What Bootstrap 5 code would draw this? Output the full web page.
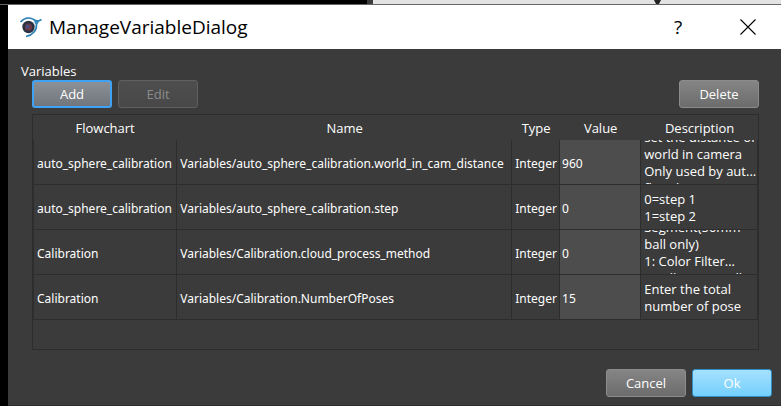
<!DOCTYPE html>
<html lang="en">
<head>
<meta charset="utf-8">
<meta name="viewport" content="width=device-width, initial-scale=1">
<title>ManageVariableDialog</title>
<link href="https://cdn.jsdelivr.net/npm/bootstrap@5.3.0/dist/css/bootstrap.min.css" rel="stylesheet">
<style>
body{background:#000;color:#fff;font:13px/17px "Open Sans","Noto Sans",sans-serif}
.backdrop{height:5px;overflow:hidden;border-bottom:1px solid #666}
.backdrop .dark-part{width:47%;background:#000}
.backdrop .light-part{background:#e3e3e3;border-left:6px solid #3c3c3c}
.marker{width:7px;height:5px;margin-right:120px}
.dialog{margin-left:8px;background:#3b3b3b;border-bottom:1px solid #2e2e2e}
.titlebar{height:44px;background:#fff;color:#000;padding:0 18px 0 10px}
.titlebar h1{font:19px/26px "Open Sans","Noto Sans",sans-serif;margin:0 0 0 5px}
.win-btn{width:30px;height:30px;border:0;background:none;padding:0;color:#000;font-size:19px;line-height:30px}
.win-btn + .win-btn{margin-left:40px}
.content{padding:14px 9px 8px 13px}
.group{padding:0 13px 0 11px}
.dlg-btn{width:80px;height:28px;padding:0;font-size:13px;line-height:24px;color:#fff;border:1px solid #8c8c8c;border-radius:3px;background:linear-gradient(#858585,#6c6c6c)}
.dlg-btn:hover{color:#fff;border-color:#a0a0a0}
.dlg-btn.focused{border:2px solid #3fa2f5;background:linear-gradient(#8b9197,#71767c)}
.dlg-btn:disabled{opacity:1;color:#8b8b8b;border-color:#606060;background:linear-gradient(#4e4e4e,#484848)}
.dlg-btn.accept{border:1px solid #2f8fc4;background:linear-gradient(#a5e1ff,#74cffc)}
.action-gap{margin-left:6px}
.frame{border:1px solid #2d2d2d;min-height:236px;margin-top:6px}
.vars{width:100%;table-layout:fixed;border-collapse:separate;border-spacing:0}
.vars th{height:25px;padding:2px 0 0;text-align:center;font-weight:400}
.vars td{height:45px;padding:2px 0 0 3px;border-right:1px solid #2d2d2d;border-bottom:1px solid #2d2d2d;white-space:nowrap;font-family:"Noto Sans","Open Sans",sans-serif;font-size:12px}
.vars td:first-child{border-left:1px solid #2d2d2d}
.vars td.val{background:#4d4d4d;padding-left:2px}
.vars td.note{padding-top:0}
.desc{height:44px;padding-top:2px;font-family:"Open Sans","Noto Sans",sans-serif;font-size:13px}
.actions{margin-top:19px}
</style>
</head>
<body>
<div class="backdrop d-flex"><div class="dark-part"></div><div class="light-part flex-grow-1 d-flex justify-content-end"><svg class="marker" viewBox="0 0 7 5"><path d="M0 0H7L5 4H2Z" fill="#222"/></svg></div></div>
<main class="dialog">
<header class="titlebar d-flex align-items-center">
<svg width="26" height="24" viewBox="0 0 26 24" aria-hidden="true"><g fill="none" stroke="#2b80b4" stroke-width="1.700"><path d="M2.500 7C7 2 13 1.500 18.500 6.500M23.500 4.500L19.500 6.500M18.500 9C19 15 15 20 8 21.500"/><circle cx="18.500" cy="7" r="1.300"/></g><circle cx="10.500" cy="12" r="6.200" fill="#2b3342"/><circle cx="10.500" cy="12" r="3.600" fill="#70394a"/><circle cx="9.500" cy="11.500" r="1.800" fill="#38558b"/></svg>
<h1>ManageVariableDialog</h1>
<button type="button" class="win-btn ms-auto" aria-label="Help">?</button>
<button type="button" class="win-btn" aria-label="Close"><svg class="d-block mx-auto" width="16" height="16" viewBox="0 0 16 16"><path d="M.5.5l15 15M15.500.5l-15 15" stroke="#000" stroke-width="1.100"/></svg></button>
</header>
<div class="content">
<div>Variables</div>
<section class="group">
<div class="d-flex"><button type="button" class="btn dlg-btn focused">Add</button><button type="button" class="btn dlg-btn action-gap" disabled>Edit</button><button type="button" class="btn dlg-btn ms-auto">Delete</button></div>
<div class="frame">
<table class="vars">
<colgroup><col style="width:19.9%"><col style="width:46.2%"><col style="width:6.6%"><col style="width:11.2%"><col></colgroup>
<thead><tr><th scope="col">Flowchart</th><th scope="col">Name</th><th scope="col">Type</th><th scope="col">Value</th><th scope="col">Description</th></tr></thead>
<tbody>
<tr><td>auto_sphere_calibration</td><td>Variables/auto_sphere_calibration.world_in_cam_distance</td><td>Integer</td><td class="val">960</td><td class="note"><div class="desc d-flex align-items-center overflow-hidden"><div>set the distance of<br>world in camera<br>Only used by aut...<br>flowchart</div></div></td></tr>
<tr><td>auto_sphere_calibration</td><td>Variables/auto_sphere_calibration.step</td><td>Integer</td><td class="val">0</td><td class="note"><div class="desc d-flex align-items-center overflow-hidden"><div>0=step 1<br>1=step 2</div></div></td></tr>
<tr><td>Calibration</td><td>Variables/Calibration.cloud_process_method</td><td>Integer</td><td class="val">0</td><td class="note"><div class="desc d-flex align-items-center overflow-hidden"><div>Segment(50mm<br>ball only)<br>1: Color Filter...<br>small area small</div></div></td></tr>
<tr><td>Calibration</td><td>Variables/Calibration.NumberOfPoses</td><td>Integer</td><td class="val">15</td><td class="note"><div class="desc d-flex align-items-center overflow-hidden"><div>Enter the total<br>number of pose</div></div></td></tr>
</tbody>
</table>
</div>
</section>
<footer class="actions d-flex justify-content-end"><button type="button" class="btn dlg-btn">Cancel</button><button type="button" class="btn dlg-btn accept action-gap">Ok</button></footer>
</div>
</main>
<script src="https://cdn.jsdelivr.net/npm/bootstrap@5.3.0/dist/js/bootstrap.bundle.min.js"></script>
</body>
</html>
